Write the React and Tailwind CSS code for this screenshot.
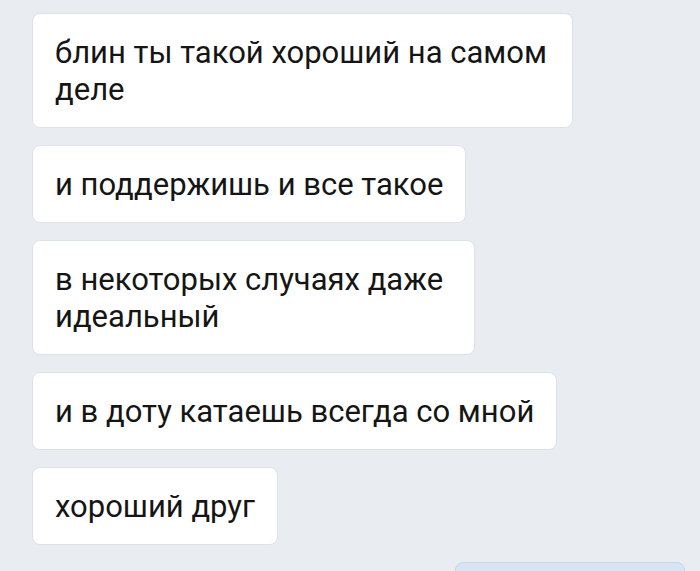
export default function App() {
  const bubble =
    "bg-white border border-[#dde2e8] rounded-[8px] pl-[22px] pr-[22px] pt-[20px] pb-[19px] text-[31px] leading-[37px] text-[#151515]";
  return (
    <div
      className="w-[700px] h-[571px] overflow-hidden bg-[#e9edf1] flex flex-col gap-[17px] pl-[32px] pt-[13px]"
      style={{ fontFamily: "Roboto, 'Noto Sans', sans-serif" }}
    >
      <div className={`${bubble} w-[541px] self-start`}>блин ты такой хороший на самом деле</div>
      <div className={`${bubble} self-start`}>и поддержишь и все такое</div>
      <div className={`${bubble} w-[443px] self-start`}>в некоторых случаях даже идеальный</div>
      <div className={`${bubble} self-start`}>и в доту катаешь всегда со мной</div>
      <div className={`${bubble} self-start`}>хороший друг</div>
      <div className="self-end mr-[15px] w-[230px] h-[60px] shrink-0 bg-[#d6e5f4] border border-[#c8d5e2] rounded-[8px]" />
    </div>
  );
}
